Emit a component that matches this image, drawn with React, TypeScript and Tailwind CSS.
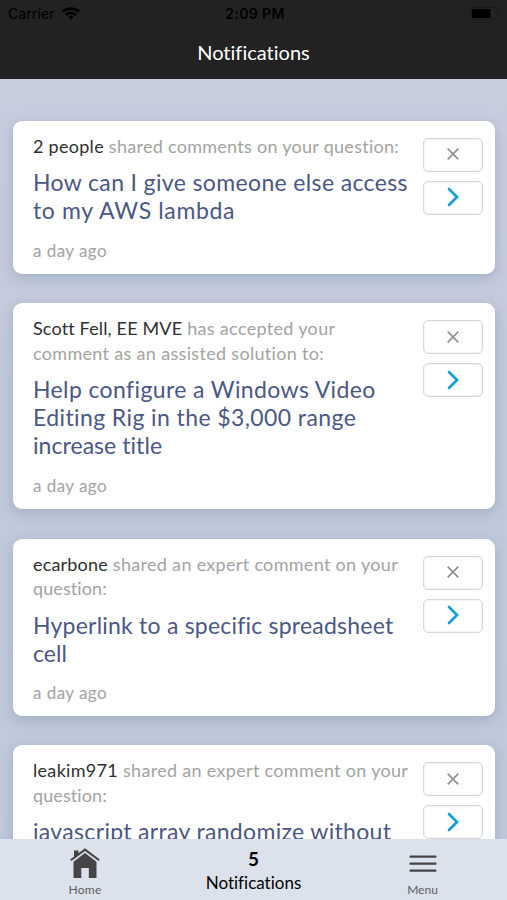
import React from "react";

type Line = { text: string; lead?: string; leadTrack?: string; track: string };
type Notice = { head: Line[]; title: Line[]; time?: string; height: string };

const notices: Notice[] = [
  {
    height: "h-[153px]",
    head: [{ lead: "2 people", text: " shared comments on your question:", track: "tracking-[0.28px]" }],
    title: [
      { text: "How can I give someone else access", track: "tracking-[0.36px]" },
      { text: "to my AWS lambda", track: "tracking-[0.65px]" },
    ],
    time: "a day ago",
  },
  {
    height: "h-[206px]",
    head: [
      { lead: "Scott Fell, EE MVE", leadTrack: "tracking-[0.15px]", text: " has accepted your", track: "tracking-[0.33px]" },
      { text: "comment as an assisted solution to:", track: "tracking-[0.32px]" },
    ],
    title: [
      { text: "Help configure a Windows Video", track: "tracking-[0.38px]" },
      { text: "Editing Rig in the $3,000 range", track: "tracking-[0.4px]" },
      { text: "increase title", track: "tracking-[0.05px]" },
    ],
    time: "a day ago",
  },
  {
    height: "h-[177px]",
    head: [
      { lead: "ecarbone", leadTrack: "tracking-[0.18px]", text: " shared an expert comment on your", track: "tracking-[0.31px]" },
      { text: "question:", track: "tracking-[0.1px]" },
    ],
    title: [
      { text: "Hyperlink to a specific spreadsheet", track: "tracking-[0.22px]" },
      { text: "cell", track: "tracking-[0.05px]" },
    ],
    time: "a day ago",
  },
  {
    height: "h-[177px]",
    head: [
      { lead: "leakim971", text: " shared an expert comment on your", track: "tracking-[0.31px]" },
      { text: "question:", track: "tracking-[0.1px]" },
    ],
    title: [{ text: "javascript array randomize without", track: "tracking-[0.33px]" }],
  },
];

function Card({ notice }: { notice: Notice }) {
  return (
    <article
      className={`flex shrink-0 justify-between rounded-[9px] bg-white pl-5 pr-3 shadow-[0_4px_14px_rgba(110,130,155,0.38)] ${notice.height}`}
    >
      <div className="w-[380px] pt-[13px]">
        <div className="text-[18px] leading-[24.5px] text-[#a3a3a3]">
          {notice.head.map((l) => (
            <p key={l.text} className={`whitespace-nowrap ${l.track}`}>
              {l.lead && <span className={`text-[#303030] ${l.leadTrack ?? ""}`}>{l.lead}</span>}
              {l.text}
            </p>
          ))}
        </div>
        <h2 className="mt-[10px] text-[23px] leading-[28.2px] text-[#4b5784]">
          {notice.title.map((l) => (
            <span key={l.text} className={`block whitespace-nowrap ${l.track}`}>
              {l.text}
            </span>
          ))}
        </h2>
        {notice.time && (
          <p className="mt-[14.5px] text-[17px] leading-[24.5px] tracking-[0.45px] text-[#a3a3a3]">{notice.time}</p>
        )}
      </div>
      <div className="flex w-[60px] shrink-0 flex-col gap-[9px] pt-[17px]">
        <button className="flex h-[34px] items-center justify-center rounded-[5px] border border-[#d8d8db] pb-px shadow-[inset_0_0_0_1px_#f4f4f6]">
          <svg width="12" height="12" viewBox="0 0 12 12" fill="none" stroke="#919191" strokeWidth="1.7">
            <path d="M.7.7l10.600 10.600M11.300.7L.7 11.300" />
          </svg>
        </button>
        <button className="flex h-[34px] items-center justify-center rounded-[5px] border border-[#d8d8db] pb-px shadow-[inset_0_0_0_1px_#f4f4f6]">
          <svg width="12" height="20" viewBox="0 0 12 20" fill="none" stroke="#119fd8" strokeWidth="2.7" strokeLinecap="round" strokeLinejoin="miter">
            <path d="M2 2l8 8L2 18" />
          </svg>
        </button>
      </div>
    </article>
  );
}

export default function App() {
  return (
    <div className="flex h-[900px] w-[507px] flex-col overflow-hidden bg-[#c4cbde] font-[Lato,sans-serif]">
      <header className="h-[79px] shrink-0 bg-[#222222]">
        <div className="grid h-[27px] grid-cols-3 items-center pl-[8px] pr-[5px] font-[Inter,sans-serif] text-black">
          <div className="flex items-center gap-[7px] text-[14px]">
            <span className="tracking-[0.1px]">Carrier</span>
            <svg width="18" height="13" viewBox="0 0 18 13" fill="none" stroke="black" strokeWidth="2.5">
              <path d="M1 4.7C5.500.3 12.500.3 17 4.700M4 8C6.800 5.200 11.200 5.200 14 8" />
              <path d="M9 12.500L6.300 9.800C7.800 8.500 10.200 8.500 11.700 9.800Z" fill="black" stroke="none" />
            </svg>
          </div>
          <span className="text-center text-[14px] font-semibold tracking-[0.4px]">2:09 PM</span>
          <svg className="justify-self-end" width="32" height="13" viewBox="0 0 32 13">
            <rect x="0.5" y="0.5" width="27" height="12" rx="3" fill="none" stroke="#1a1a1a" />
            <rect x="2" y="2" width="18.5" height="9" rx="1" fill="black" />
            <path d="M29 4.500c2 .5 2 3.500 0 4Z" fill="#1a1a1a" />
          </svg>
        </div>
        <h1 className="pt-[11px] text-center text-[20px] leading-[28px] tracking-[0.01px] text-white">Notifications</h1>
      </header>
      <main className="flex min-h-0 flex-1 flex-col gap-[29.5px] overflow-hidden bg-linear-to-b from-[#c8cdde] via-[#c0cadb] to-[#c1c9dc] pl-[13px] pr-[12px] pt-[41.5px]">
        {notices.map((n) => (
          <Card key={n.head[0].lead} notice={n} />
        ))}
      </main>
      <footer className="grid h-[61px] shrink-0 grid-cols-3 bg-[#dce2eb] text-[#5b5d60]">
        <div className="flex flex-col items-center pt-[9px] pl-px text-[12px] leading-4">
          <svg width="30" height="31" viewBox="0 0 30 31" fill="#444446">
            <path d="M4 2.500h4.500v4L4 10Z" />
            <path d="M15 .3L29.800 11.500L28.600 13L15 2.900L1.400 13L.2 11.500Z" />
            <path d="M15 5L26.500 13.700V30H18.800V20H11.300V30H3.500V13.700Z" />
          </svg>
          <span className="mt-[3px] tracking-[0.3px]">Home</span>
        </div>
        <div className="flex flex-col items-center pt-[8px] text-black">
          <b className="text-[19px] leading-6">5</b>
          <span className="text-[17px] leading-6 tracking-[0.01px]">Notifications</span>
        </div>
        <div className="flex flex-col items-center pt-[16px] text-[12px] leading-4">
          <svg width="28" height="18" viewBox="0 0 28 18" stroke="#444446" strokeWidth="2.2" strokeLinecap="round">
            <path d="M1.500 1.700h25M1.500 8.700h25M1.500 15.700h25" />
          </svg>
          <span className="mt-[9px]">Menu</span>
        </div>
      </footer>
    </div>
  );
}
